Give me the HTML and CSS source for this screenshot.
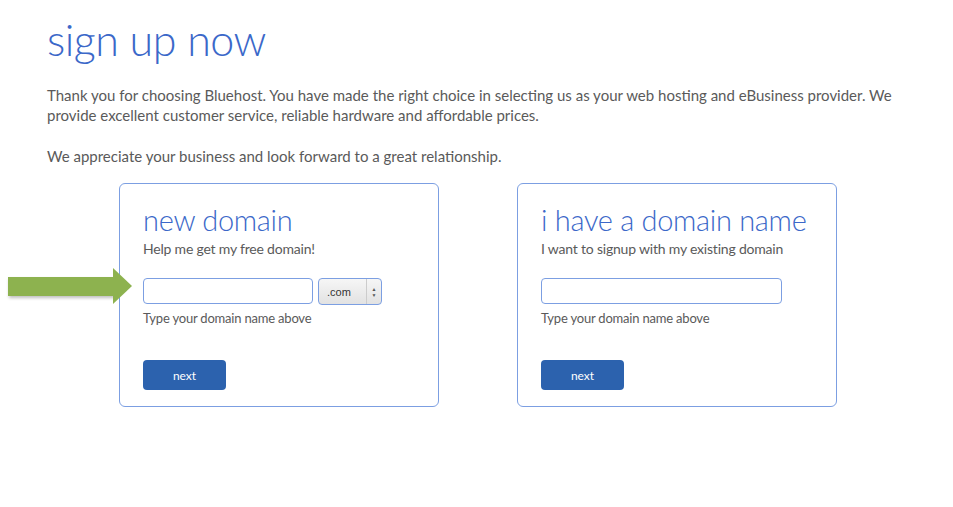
FILE: index.html
```html
<!DOCTYPE html>
<html lang="en">
<head>
    <meta charset="UTF-8">
    <title>sign up now</title>
    <link rel="stylesheet" href="styles.css">
</head>
<body>
<div class="page">
    <h1 class="title">sign up now</h1>
    <p class="intro">Thank you for choosing Bluehost. You have made the right choice in selecting us as your web hosting and eBusiness provider. We provide excellent customer service, reliable hardware and affordable prices.</p>
    <p class="intro">We appreciate your business and look forward to a great relationship.</p>

    <div class="cards">
        <div class="card">
            <div class="arrow"></div>
            <h2>new domain</h2>
            <p class="sub">Help me get my free domain!</p>
            <div class="field">
                <input type="text" class="domain">
                <div class="tld">
                    <span>.com</span>
                    <span class="updown">&#9650;<br>&#9660;</span>
                </div>
            </div>
            <p class="hint">Type your domain name above</p>
            <button class="next">next</button>
        </div>

        <div class="card">
            <h2>i have a domain name</h2>
            <p class="sub">I want to signup with my existing domain</p>
            <div class="field">
                <input type="text" class="domain wide">
            </div>
            <p class="hint">Type your domain name above</p>
            <button class="next">next</button>
        </div>
    </div>
</div>
</body>
</html>
```

FILE: styles.css
```css
body, h1, h2, p {
    margin: 0;
    padding: 0;
}

body {
    background: #fff;
    font-family: Lato, "Open Sans", sans-serif;
    color: #5a5a5a;
}

.page {
    padding: 16px 0 0 47px;
}

.title {
    font-size: 43px;
    font-weight: 300;
    color: #3b68c9;
    line-height: 48px;
    letter-spacing: -0.5px;
}

.intro {
    width: 860px;
    font-size: 15px;
    line-height: 20px;
    margin-top: 21px;
}

.intro + .intro {
    margin-top: 21px;
}

.cards {
    display: flex;
    gap: 78px;
    margin: 17px 0 0 72px;
}

.card {
    position: relative;
    width: 320px;
    height: 224px;
    box-sizing: border-box;
    border: 1.5px solid #7c9fe2;
    border-radius: 6px;
    padding: 18px 0 0 23px;
}

.card h2 {
    font-size: 29px;
    font-weight: 300;
    color: #3b68c9;
    line-height: 36px;
    letter-spacing: -0.3px;
}

.sub {
    font-size: 14px;
    line-height: 20px;
    margin-top: 1px;
    letter-spacing: -0.2px;
}

.field {
    display: flex;
    gap: 5px;
    margin-top: 19px;
    height: 27px;
}

.domain {
    width: 170px;
    height: 26px;
    box-sizing: border-box;
    border: 1.5px solid #7c9fe2;
    border-radius: 4px;
    padding: 0 6px;
    outline: none;
}

.domain.wide {
    width: 241px;
}

.tld {
    width: 64px;
    height: 27px;
    box-sizing: border-box;
    border: 1.5px solid #7c9fe2;
    border-radius: 4px;
    background: linear-gradient(#f6f6f6, #e2e2e2);
    display: flex;
    align-items: center;
    font-family: "Liberation Sans", sans-serif;
    font-size: 11px;
    color: #333;
}

.tld span:first-child {
    flex: 1;
    padding-left: 8px;
}

.updown {
    width: 15px;
    height: 100%;
    border-left: 1px solid #ccc;
    font-size: 5px;
    line-height: 6px;
    text-align: center;
    padding-top: 7px;
    box-sizing: border-box;
    color: #555;
}

.hint {
    font-size: 13px;
    line-height: 18px;
    margin-top: 4px;
    letter-spacing: -0.2px;
}

.next {
    display: block;
    margin-top: 33px;
    width: 83px;
    height: 30px;
    border: none;
    border-radius: 4px;
    background: #2c62ae;
    color: #fff;
    font-family: Lato, sans-serif;
    font-size: 12px;
}

.arrow {
    position: absolute;
    left: -112px;
    top: 93px;
    width: 106px;
    height: 19px;
    background: #8db24f;
    box-shadow: 1px 2px 3px rgba(0, 0, 0, 0.25);
}

.arrow:after {
    content: "";
    position: absolute;
    left: 105px;
    top: -9px;
    border-top: 18px solid transparent;
    border-bottom: 18px solid transparent;
    border-left: 19px solid #8db24f;
}
```
